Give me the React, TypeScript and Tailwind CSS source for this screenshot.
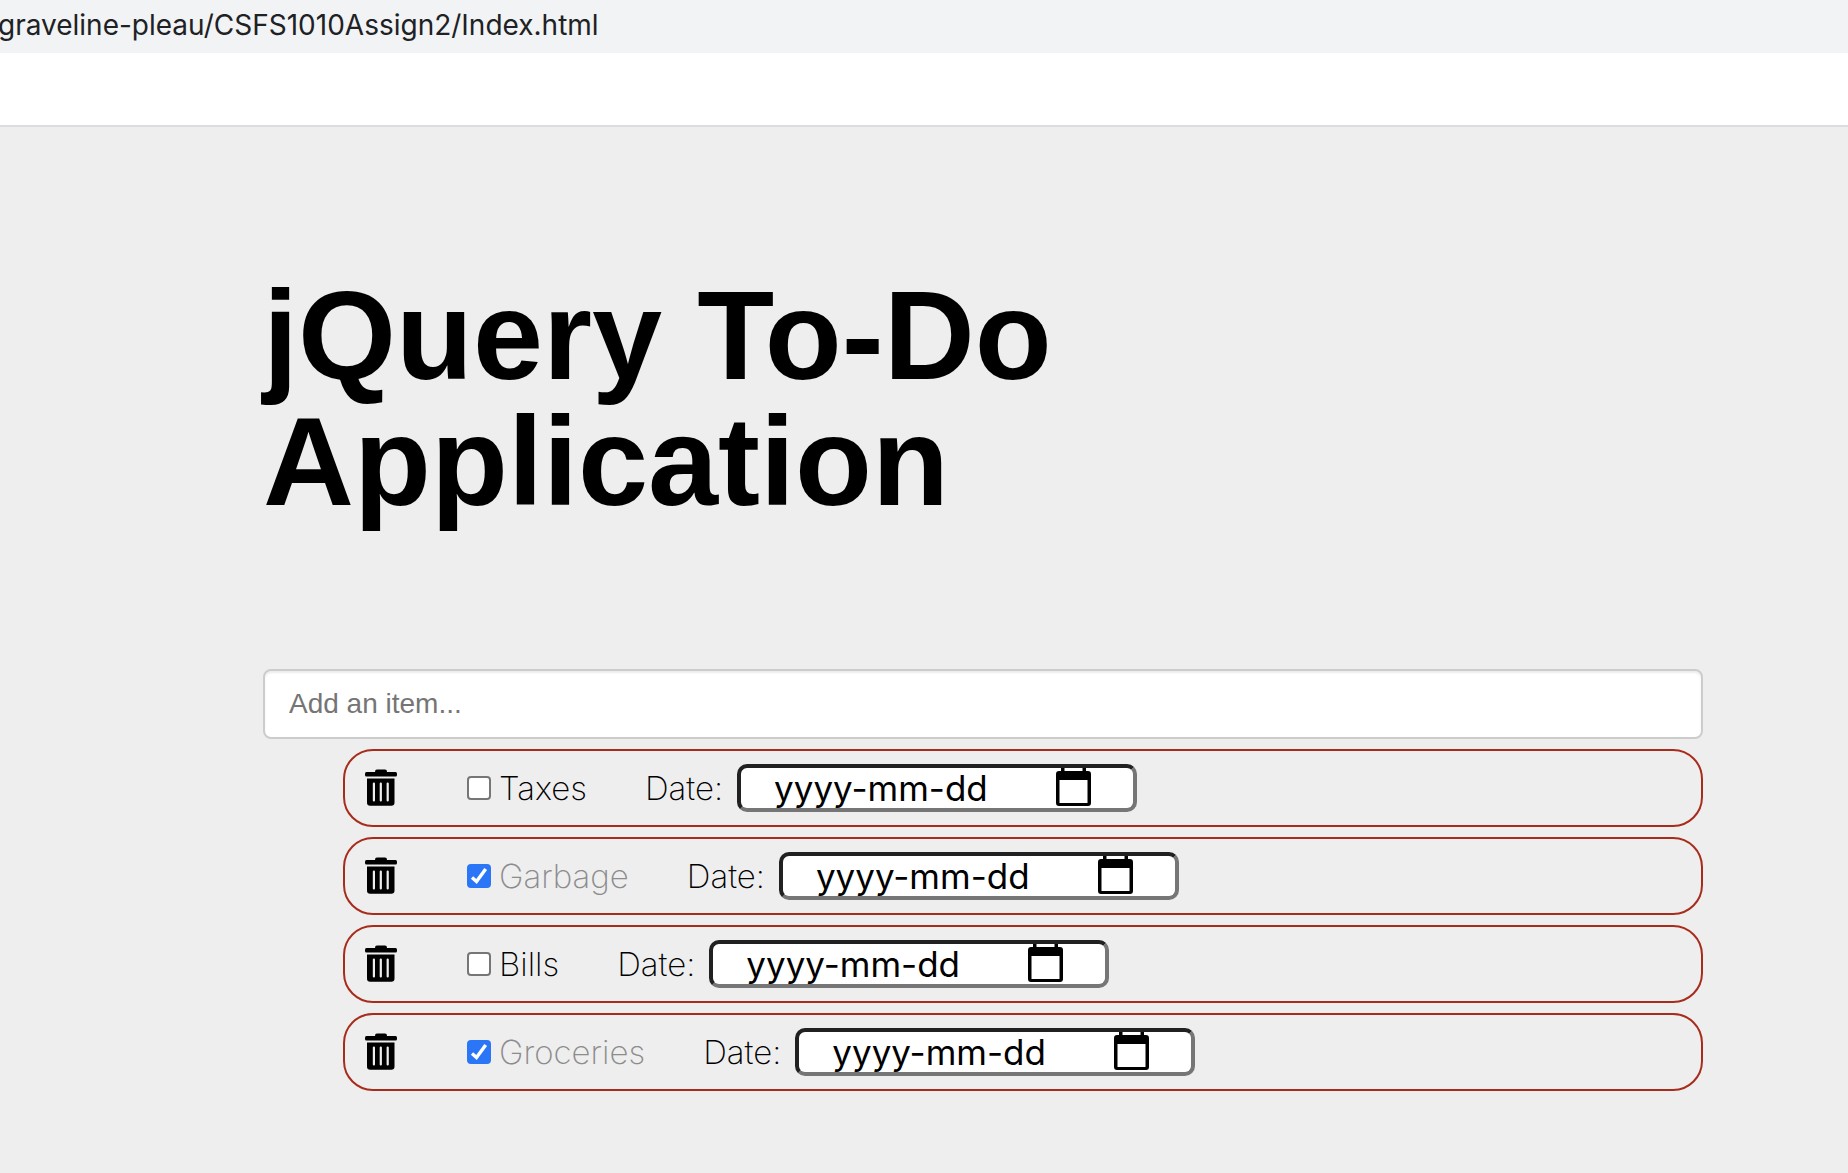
import { useState } from "react";

type Item = { id: string; name: string; done: boolean };

const INITIAL_ITEMS: Item[] = [
  { id: "taxes", name: "Taxes", done: false },
  { id: "garbage", name: "Garbage", done: true },
  { id: "bills", name: "Bills", done: false },
  { id: "groceries", name: "Groceries", done: true },
];

function TrashIcon() {
  return (
    <svg viewBox="0 0 32 38" className="h-[38px] w-8" aria-hidden="true">
      <rect x="0" y="3" width="32" height="4.500" rx="1.500" />
      <rect x="10" y="0.500" width="12" height="5" rx="2" />
      <path
        fillRule="evenodd"
        d="M2 9.500h27.500V33.500a3.200 3.200 0 0 1-3.200 3.200H5.200A3.200 3.200 0 0 1 2 33.500zM7.800 14.500v17a1.100 1.100 0 0 0 2.200 0v-17a1.100 1.100 0 0 0-2.200 0zM14.700 14.500v17a1.100 1.100 0 0 0 2.200 0v-17a1.100 1.100 0 0 0-2.200 0zM21.600 14.500v17a1.100 1.100 0 0 0 2.200 0v-17a1.100 1.100 0 0 0-2.200 0z"
      />
    </svg>
  );
}

function CalendarIcon() {
  return (
    <svg viewBox="0 0 35 40" className="h-10 w-[35px]" aria-hidden="true">
      <path
        fillRule="evenodd"
        d="M5 0h3.500v3h18V0H30v3h2a3 3 0 0 1 3 3v29a3 3 0 0 1-3 3H3a3 3 0 0 1-3-3V6a3 3 0 0 1 3-3h2zM3.500 12v23h28V12z"
      />
    </svg>
  );
}

function TodoRow({ item, onToggle, onRemove }: { item: Item; onToggle: () => void; onRemove: () => void }) {
  return (
    <li className="flex h-[78px] items-center rounded-[30px] border-2 border-[#a72c1b] pl-5">
      <button type="button" aria-label={`Delete ${item.name}`} className="flex" onClick={onRemove}>
        <TrashIcon />
      </button>
      <label className="ml-[70px] flex items-center">
        <span className="grid">
          <input
            type="checkbox"
            checked={item.done}
            onChange={onToggle}
            className="col-start-1 row-start-1 size-6 appearance-none rounded-[4px] border-2 border-[#767676] bg-white checked:border-[#2a76f6] checked:bg-[#2a76f6]"
          />
          {item.done && (
            <svg viewBox="0 0 24 24" className="pointer-events-none col-start-1 row-start-1 size-6" aria-hidden="true">
              <path d="M5 13.500 9.500 17.500 18.700 5" fill="none" stroke="white" strokeWidth="3.400" />
            </svg>
          )}
        </span>
        <span className={item.done ? "ml-2 text-[#8c8c8c]" : "ml-2"}>{item.name}</span>
      </label>
      <label htmlFor={`date-${item.id}`} className="ml-[58px]">
        Date:
      </label>
      <div className="ml-[14px] flex h-12 w-[400px] items-center overflow-hidden rounded-[10px] border-4 border-t-[#212121] border-r-[#767676] border-b-[#767676] border-l-[#212121] bg-white">
        <input
          id={`date-${item.id}`}
          type="text"
          placeholder="yyyy-mm-dd"
          className="ml-[33px] h-10 w-[230px] bg-transparent text-[35px] leading-10 font-normal text-black outline-none placeholder:text-black"
        />
        <button type="button" aria-label={`Pick a date for ${item.name}`} className="ml-[52px] flex">
          <CalendarIcon />
        </button>
      </div>
    </li>
  );
}

export default function App() {
  const [items, setItems] = useState(INITIAL_ITEMS);
  const toggle = (id: string) =>
    setItems((list) => list.map((i) => (i.id === id ? { ...i, done: !i.done } : i)));
  const remove = (id: string) => setItems((list) => list.filter((i) => i.id !== id));

  return (
    <div className="flex min-h-screen flex-col overflow-hidden bg-[#eeeeee] text-black">
      <header className="border-b-2 border-[#dadce0] bg-white font-['Inter',sans-serif]">
        <div className="-ml-0.5 flex h-[53px] items-center bg-[#f1f3f4] pb-1 text-[28px] leading-8 text-[#202124]">
          graveline-pleau/CSFS1010Assign2/Index.html
        </div>
        <div className="h-[72px]" />
      </header>
      <main className="pt-[146px] pr-[145px] pb-16 pl-[263px]">
        <h1 className="max-w-[960px] font-['Liberation_Sans',sans-serif] text-[126px] leading-[126px] font-bold">
          jQuery To-Do Application
        </h1>
        <input
          type="text"
          aria-label="Add an item"
          placeholder="Add an item..."
          className="mt-36 block h-[70px] w-full rounded-lg border-2 border-[#cccccc] bg-white px-6 font-['Liberation_Sans',sans-serif] text-[28px] shadow-[inset_0_2px_2px_rgba(0,0,0,0.075)] outline-none placeholder:text-[#757575]"
        />
        <ul className="mt-[10px] flex flex-col gap-[10px] pl-20 font-['Inter',sans-serif] text-[33px] leading-10 font-extralight">
          {items.map((item) => (
            <TodoRow key={item.id} item={item} onToggle={() => toggle(item.id)} onRemove={() => remove(item.id)} />
          ))}
        </ul>
      </main>
    </div>
  );
}
